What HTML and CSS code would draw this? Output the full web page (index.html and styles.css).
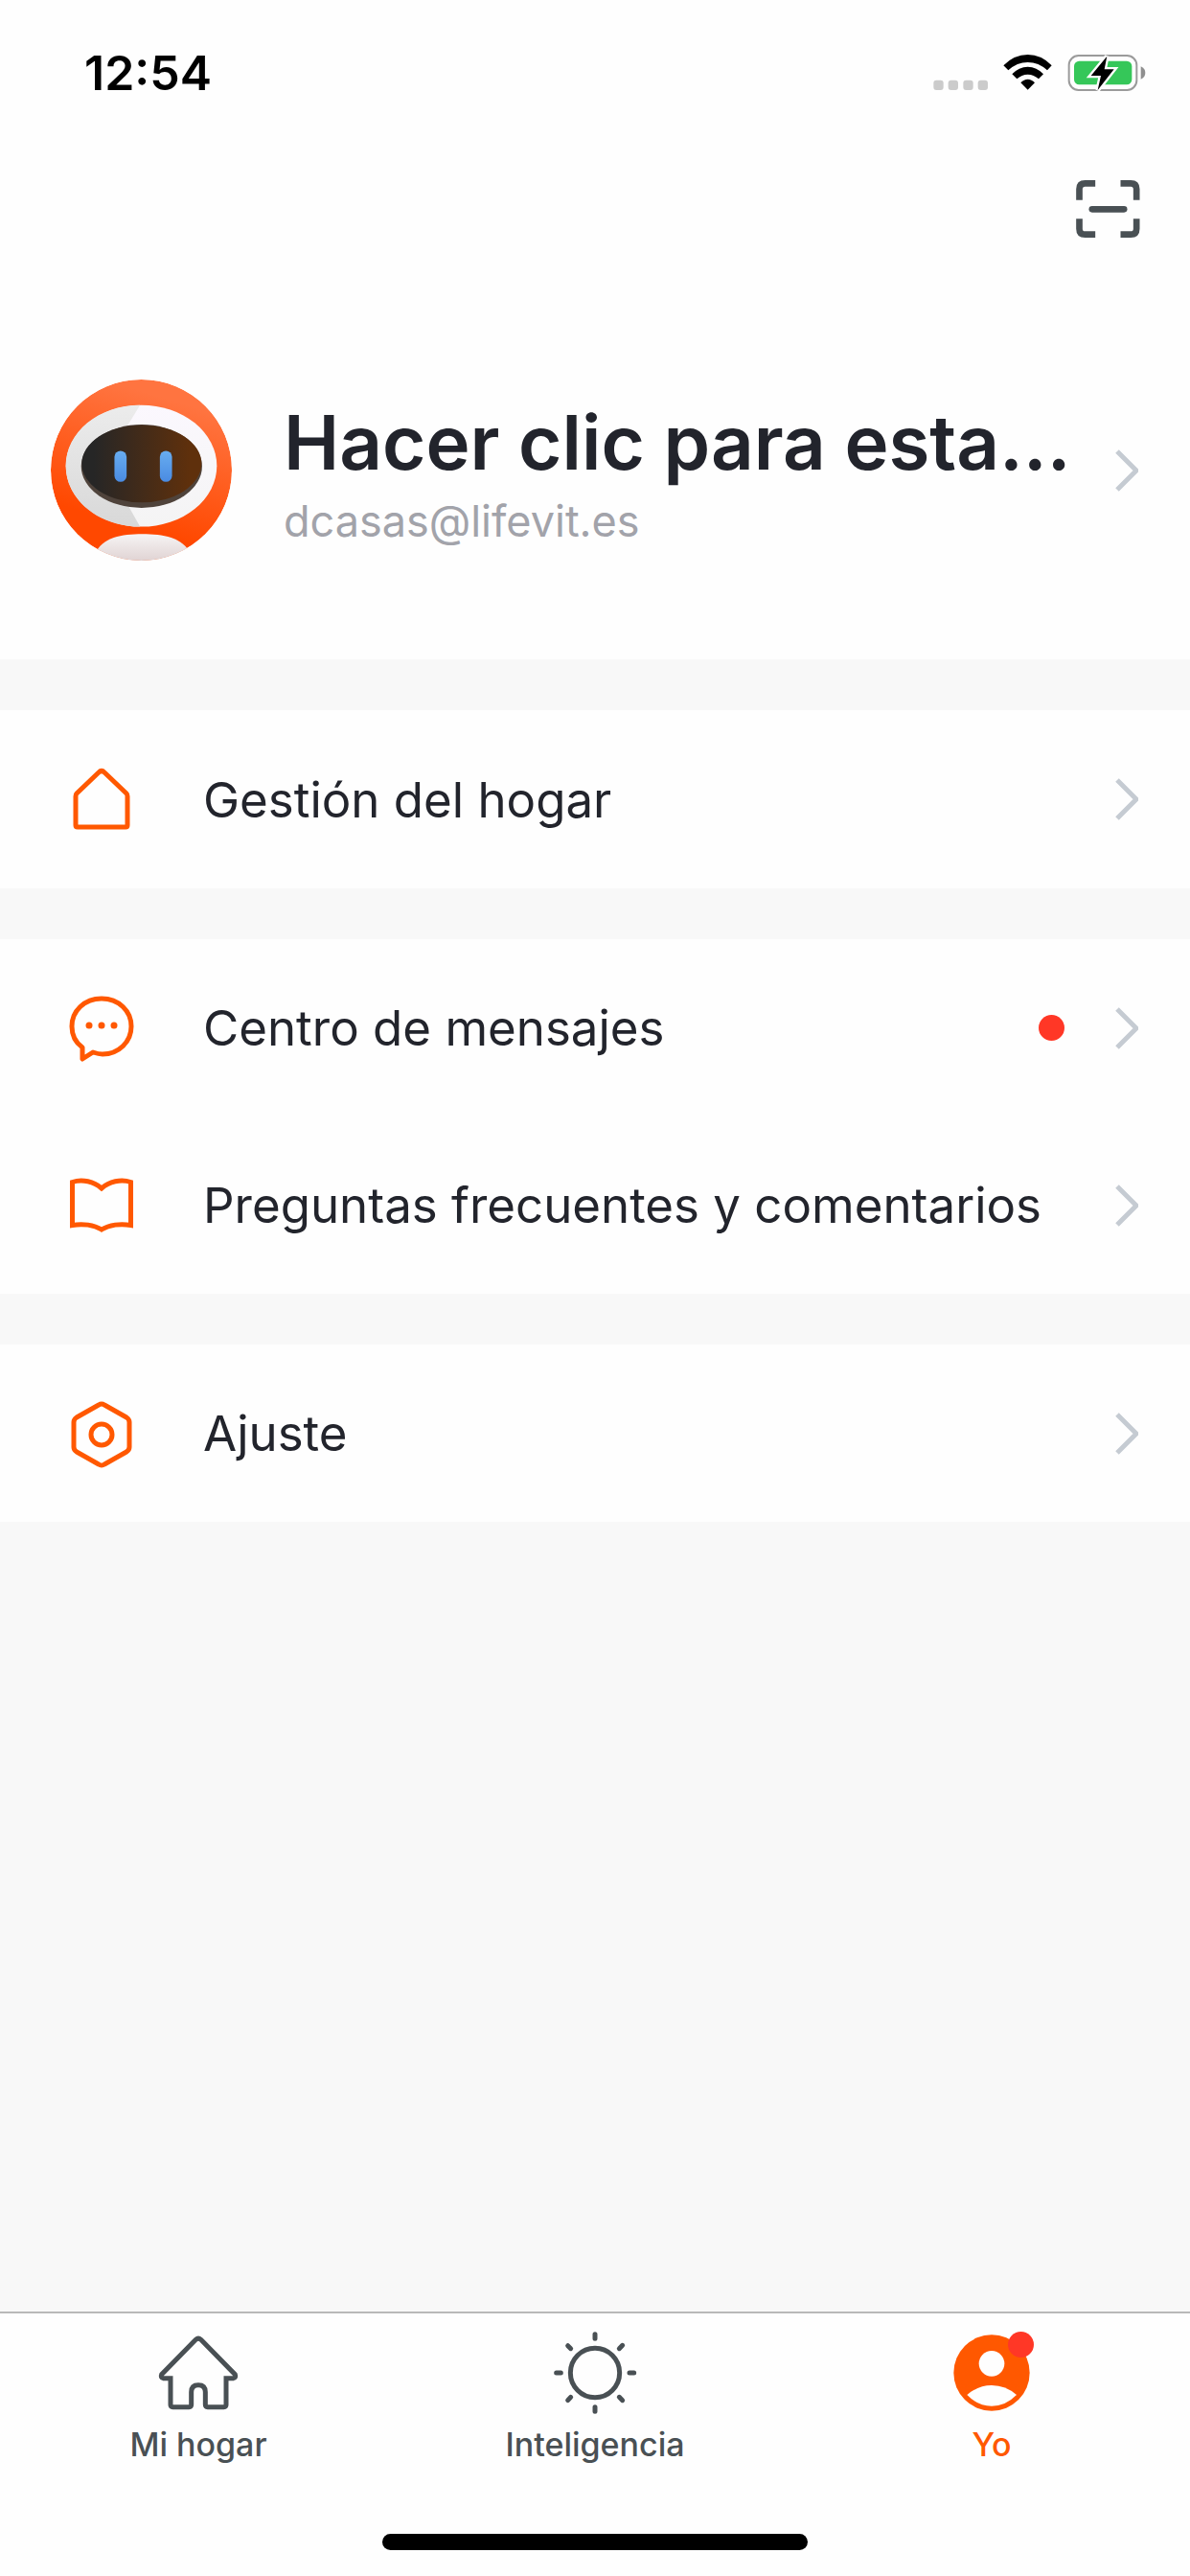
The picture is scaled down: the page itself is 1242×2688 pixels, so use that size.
FILE: index.html
```
<!DOCTYPE html>
<html lang="es">
<head>
    <meta charset="utf-8" />
    <meta name="viewport" content="width=device-width, initial-scale=1" />
    <title>Yo</title>
    <link rel="stylesheet" href="styles.css">
</head>
<body>
    <header class="top">
        <div class="statusbar">
            <time class="clock">12:54</time>
            <svg class="status-icons" viewBox="100 78 666 120" aria-hidden="true">
                <!-- signal -->
                <g fill="#cbcbcb">
                    <rect x="101" y="161" width="31" height="31" rx="9" />
                    <rect x="147" y="161" width="31" height="31" rx="9" />
                    <rect x="194" y="161" width="31" height="31" rx="9" />
                    <rect x="240" y="161" width="31" height="31" rx="9" />
                </g>
                <!-- wifi -->
                <path d="M320 115 Q353 81 396 81 Q439 81 471 115 L457 130 Q430 105 396 105 Q362 105 335 130 Z" />
                <path d="M347 142 Q368 119 396 119 Q424 119 445 142 L430 157 Q415 143 396 143 Q377 143 362 157 Z" />
                <path d="M374 169 Q384 158 396 158 Q408 158 418 169 L396 191 Z" />
                <!-- battery -->
                <rect x="525" y="84" width="212" height="108" rx="30" fill="none" stroke="#9b9b9b" stroke-width="6" />
                <rect x="541" y="101" width="181" height="74" rx="16" fill="#35c759" />
                <path d="M750 118 Q764 124 764 138 Q764 152 750 158 Z" fill="#8f8f8f" />
                <path d="M644 86 L594 147 H625 L615 192 L666 127 H636 Z" stroke="#fefefe" stroke-width="14" />
                <path d="M644 86 L594 147 H625 L615 192 L666 127 H636 Z" />
            </svg>
        </div>
        <div class="toolbar">
            <button class="scan" type="button" aria-label="Escanear">
                <svg viewBox="548 472 200 180" fill="none" stroke="#495054" stroke-width="20">
                    <path d="M558 534 V500 Q558 482 576 482 H608" />
                    <path d="M687 482 H719 Q737 482 737 500 V534" />
                    <path d="M558 593 V624 Q558 642 576 642 H608" />
                    <path d="M687 642 H719 Q737 642 737 624 V593" />
                    <path d="M598 563 H698" stroke-linecap="round" />
                </svg>
            </button>
        </div>
        <a class="profile" href="#perfil">
            <svg class="avatar" viewBox="69 78 566 566" aria-hidden="true">
                <defs>
                    <linearGradient id="skin" x1="0.65" y1="0" x2="0.35" y2="1">
                        <stop offset="0.1" stop-color="#ff7440" />
                        <stop offset="0.8" stop-color="#ff4800" />
                    </linearGradient>
                    <linearGradient id="visor">
                        <stop offset="0.1" stop-color="#262626" />
                        <stop offset="0.9" stop-color="#5f300c" />
                    </linearGradient>
                    <linearGradient id="eye" x1="0" y1="0" x2="0" y2="1">
                        <stop offset="0" stop-color="#68adf0" />
                        <stop offset="1" stop-color="#4a8be2" />
                    </linearGradient>
                    <linearGradient id="helmet" x1="0" y1="0" x2="0" y2="1">
                        <stop offset="0" stop-color="#fbf8fe" />
                        <stop offset="1" stop-color="#f4f4f4" />
                    </linearGradient>
                    <linearGradient id="shade" x1="0" y1="0" x2="0" y2="1">
                        <stop offset="0" stop-color="#ececec" />
                        <stop offset="1" stop-color="#d8d8d8" />
                    </linearGradient>
                    <linearGradient id="torso" x1="0" y1="0" x2="0" y2="1">
                        <stop offset="0" stop-color="#f6f4f4" />
                        <stop offset="1" stop-color="#dccdcd" />
                    </linearGradient>
                    <clipPath id="face"><circle cx="352" cy="361" r="283" /></clipPath>
                </defs>
                <g clip-path="url(#face)">
                    <circle cx="352" cy="361" r="283" fill="url(#skin)" />
                    <ellipse cx="352" cy="348" rx="236" ry="190" fill="url(#helmet)" />
                    <path d="M348 158 C218 158 116 243 116 348 C116 453 218 538 348 538 L310 470 V220 Z" fill="url(#shade)" />
                    <ellipse cx="353" cy="349" rx="189" ry="130" fill="#4f433b" />
                    <ellipse cx="353" cy="341" rx="187" ry="121" fill="url(#visor)" />
                    <rect x="268" y="301" width="38" height="97" rx="19" fill="url(#eye)" />
                    <rect x="410" y="301" width="38" height="97" rx="19" fill="url(#eye)" />
                    <path d="M205 625 C232 570 290 561 355 561 C420 561 480 570 508 625 L460 660 H240 Z" fill="url(#torso)" />
                </g>
            </svg>
            <span class="who">
                <strong class="nick">Hacer clic para esta…</strong>
                <span class="mail">dcasas@lifevit.es</span>
            </span>
            <svg class="chevron" viewBox="0 0 24 44"><path d="M2 2 L22 22 L2 42" /></svg>
        </a>
    </header>

    <main class="menu">
        <section class="group">
            <a class="row" href="#hogar">
                <svg class="icon" viewBox="0 0 80 80"><path d="M37 12 Q40 9 43 12 L66 34 Q67 35 67 37 V67 Q67 69 65 69 H15 Q13 69 13 67 V37 Q13 35 14 34 Z" /></svg>
                <span class="label">Gestión del hogar</span>
                <svg class="chevron" viewBox="0 0 24 44"><path d="M2 2 L22 22 L2 42" /></svg>
            </a>
        </section>
        <section class="group">
            <a class="row" href="#mensajes">
                <svg class="icon" viewBox="0 0 80 80">
                    <path d="M20 60 C13 55 9 47 9 38 C9 22 22 9 40 9 C58 9 71 22 71 38 C71 54 58 67 41 67 C37 67 34 66 31 65 L20 72 Z" />
                    <g class="dots"><circle cx="27" cy="37" r="3.5" /><circle cx="40" cy="37" r="3.5" /><circle cx="53" cy="37" r="3.5" /></g>
                </svg>
                <span class="label">Centro de mensajes</span>
                <span class="dot"></span>
                <svg class="chevron" viewBox="0 0 24 44"><path d="M2 2 L22 22 L2 42" /></svg>
            </a>
            <a class="row" href="#faq">
                <svg class="icon sharp" viewBox="0 0 80 80"><path d="M9.500 15.500 C20 12 32 15 40 22 C48 15 60 12 70.500 15.500 V60.500 C60 58.500 48 60 40 65 C32 60 20 58.500 9.500 60.500 Z" /></svg>
                <span class="label">Preguntas frecuentes y comentarios</span>
                <svg class="chevron" viewBox="0 0 24 44"><path d="M2 2 L22 22 L2 42" /></svg>
            </a>
        </section>
        <section class="group">
            <a class="row" href="#ajuste">
                <svg class="icon" viewBox="0 0 80 80">
                    <path d="M37 10 Q40 8 43 10 L66 23 Q69 25 69 28 V54 Q69 57 66 59 L43 72 Q40 74 37 72 L14 59 Q11 57 11 54 V28 Q11 25 14 23 Z" />
                    <circle cx="40" cy="41" r="11" />
                </svg>
                <span class="label">Ajuste</span>
                <svg class="chevron" viewBox="0 0 24 44"><path d="M2 2 L22 22 L2 42" /></svg>
            </a>
        </section>
    </main>

    <footer class="bottom">
        <nav class="tabs">
            <a class="tab" href="#mi-hogar">
                <svg class="tab-icon" viewBox="184 96 264 264">
                    <path d="M308 124 Q316 117 324 124 L431 233 Q435 243 426 245 H403 V328 Q403 335 396 335 H345 Q338 335 338 328 V288 Q338 266 316 266 Q294 266 294 288 V328 Q294 335 287 335 H236 Q229 335 229 328 V245 H206 Q197 243 201 233 Z" />
                </svg>
                <span>Mi hogar</span>
            </a>
            <a class="tab" href="#inteligencia">
                <svg class="tab-icon" viewBox="259 96 264 264">
                    <circle cx="391" cy="228" r="77" />
                    <path d="M391 107 V121 M391 335 V349 M270 228 H284 M499 228 H513 M306 143 L315 152 M467 152 L477 142 M306 314 L315 304 M467 304 L477 314" />
                </svg>
                <span>Inteligencia</span>
            </a>
            <a class="tab active" href="#yo">
                <span class="badge-wrap">
                    <svg class="tab-icon solid" viewBox="121 96 264 264">
                        <circle cx="253" cy="228" r="119" fill="#ff5800" />
                        <circle cx="253" cy="199" r="40" fill="#fefefe" />
                        <path d="M176 297 Q210 267 253 267 Q297 267 331 297 Q297 332 253 332 Q210 332 176 297 Z" fill="#fefefe" />
                    </svg>
                    <span class="dot badge"></span>
                </span>
                <span>Yo</span>
            </a>
        </nav>
        <div class="home-bar"></div>
    </footer>
</body>
</html>
```
FILE: styles.css
```
*{
    padding:0;
    margin:0;
    box-sizing:border-box;
}
body{
    min-height:100vh;
    display:flex;
    flex-direction:column;
    background-color:#f8f8f8;
    color:#22242c;
    font-family:Inter, "Liberation Sans", sans-serif;
}
a{
    color:inherit;
    text-decoration:none;
}
svg{
    display:block;
    flex-shrink:0;
}

/* header */
.top{
    background-color:#fefefe;
}
.statusbar{
    display:flex;
    justify-content:space-between;
    align-items:center;
    height:152px;
    padding:0 46px 0 88px;
}
.clock{
    color:#000;
    font-size:50px;
    font-weight:600;
}
.status-icons{
    width:222px;
    height:40px;
}
.toolbar{
    display:flex;
    justify-content:flex-end;
    padding:36px 52px;
}
.scan{
    border:none;
    background:none;
}
.scan svg{
    width:67px;
    height:60px;
}
.profile{
    display:flex;
    align-items:center;
    padding:112px 54px 103px 53px;
}
.avatar{
    width:189px;
    height:189px;
    margin-right:54px;
}
.who{
    flex:1;
    min-width:0;
    padding-top:6px;
}
.nick, .mail{
    display:block;
    white-space:nowrap;
}
.nick{
    overflow:hidden;
    text-overflow:ellipsis;
    font-size:78px;
    line-height:100px;
    font-weight:600;
}
.mail{
    color:#a2a3aa;
    font-size:45px;
    line-height:64px;
}
.chevron{
    width:24px;
    height:44px;
    margin-left:40px;
    fill:none;
    stroke:#c5cbd2;
    stroke-width:5;
}

/* menu */
.menu{
    flex:1;
}
.group{
    margin-top:53px;
    background-color:#fefefe;
}
.row{
    display:flex;
    align-items:center;
    height:185px;
    padding:0 54px 0 66px;
}
.group:first-child .row{
    height:186px;
}
.icon{
    width:80px;
    height:80px;
    margin-right:66px;
    fill:none;
    stroke:#ff5800;
    stroke-width:5;
    stroke-linejoin:round;
}
.sharp{
    stroke-linejoin:miter;
}
.dots{
    fill:#ff5800;
    stroke:none;
}
.label{
    flex:1;
    font-size:51px;
    white-space:nowrap;
}
.dot{
    width:27px;
    height:27px;
    border-radius:50%;
    background-color:#ff3726;
}
.dot + .chevron{
    margin-left:53px;
}

/* bottom tabs */
.bottom{
    background-color:#fefefe;
    border-top:2px solid #b9b9b9;
}
.tabs{
    display:flex;
    padding-top:18px;
}
.tab{
    flex:1;
    display:flex;
    flex-direction:column;
    align-items:center;
    color:#495054;
    font-size:34px;
    line-height:42px;
    font-weight:500;
}
.active{
    color:#ff5800;
}
.tab-icon{
    width:88px;
    height:88px;
    margin-bottom:10px;
    fill:none;
    stroke:#495054;
    stroke-width:15;
    stroke-linecap:round;
}
.solid{
    stroke:none;
}
.badge-wrap{
    position:relative;
}
.badge{
    position:absolute;
    top:1px;
    right:0;
}
.home-bar{
    width:444px;
    height:17px;
    margin:72px auto 27px;
    border-radius:9px;
    background-color:#000;
}
```
